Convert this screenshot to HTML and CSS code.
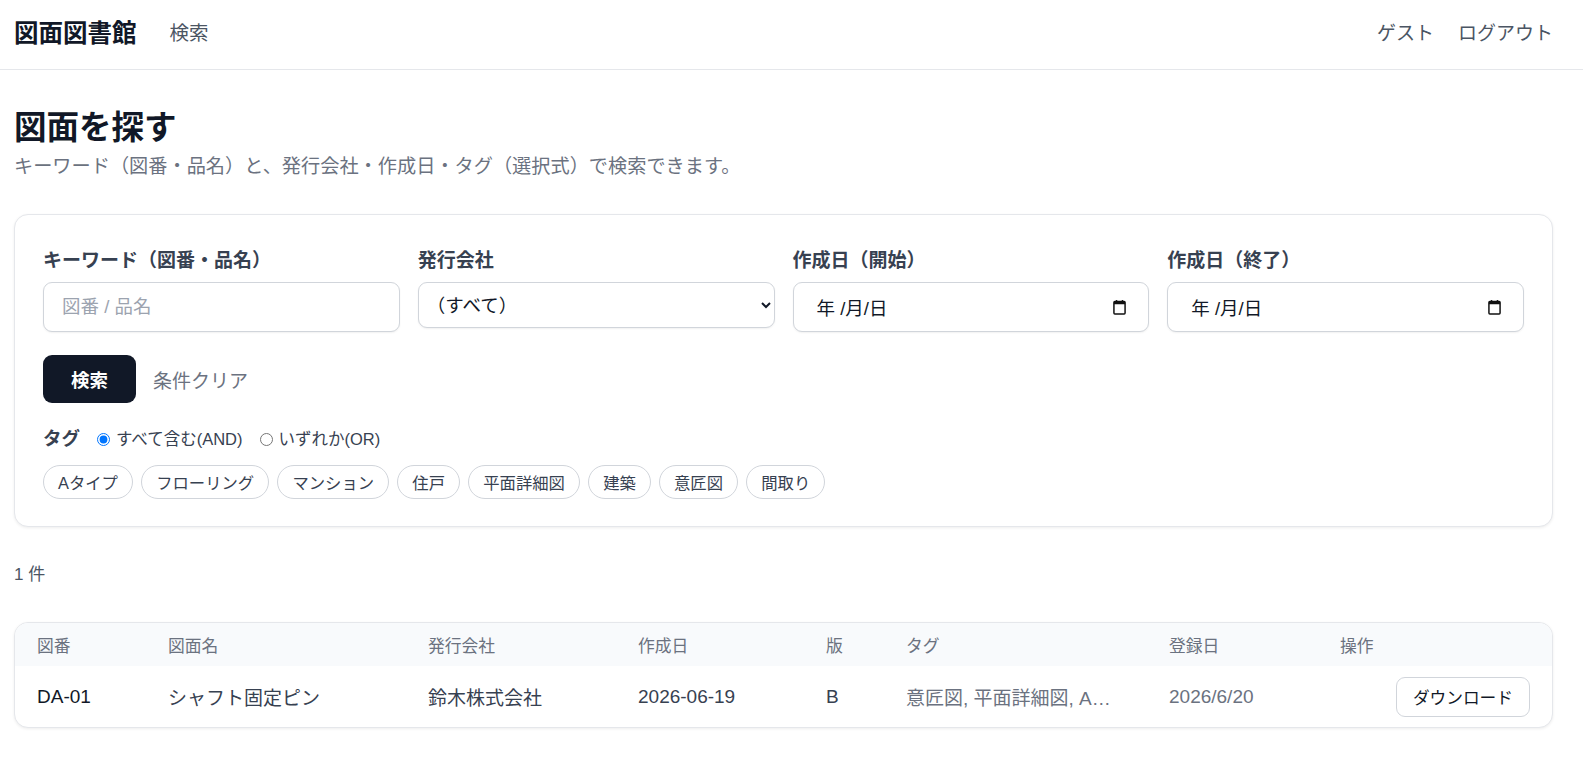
FILE: index.html
```html
<!DOCTYPE html>
<html lang="ja">

<head>
    <meta charset="utf-8">
    <title>図面を探す - 図面図書館</title>
    <link rel="stylesheet" href="styles.css">
</head>

<body>
    <header class="topbar">
        <a class="brand" href="#">図面図書館</a>
        <nav class="mainnav">
            <a href="#">検索</a>
        </nav>
        <div class="usernav">
            <span>ゲスト</span>
            <a href="#">ログアウト</a>
        </div>
    </header>

    <main class="page">
        <h1 class="page-title">図面を探す</h1>
        <p class="page-lead">キーワード（図番・品名）と、発行会社・作成日・タグ（選択式）で検索できます。</p>

        <form class="card search-form" onsubmit="return false">
            <div class="fields">
                <div class="field">
                    <label class="field-label" for="q">キーワード（図番・品名）</label>
                    <input class="control" id="q" type="text" placeholder="図番 / 品名">
                </div>
                <div class="field">
                    <label class="field-label" for="company">発行会社</label>
                    <select class="control control-select" id="company">
                        <option>（すべて）</option>
                        <option>鈴木株式会社</option>
                    </select>
                </div>
                <div class="field">
                    <label class="field-label">作成日（開始）</label>
                    <div class="control datebox">
                        <span>年 /月/日</span>
                        <svg class="cal-icon" viewBox="0 0 14 16" width="13" height="15">
                            <rect x="1" y="1.5" width="12" height="13.5" rx="1" fill="none" stroke="#111" stroke-width="1.6"/>
                            <rect x="1" y="1.5" width="12" height="3" fill="#111"/>
                            <rect x="3" y="0" width="1.6" height="3" fill="#111"/>
                            <rect x="9.4" y="0" width="1.6" height="3" fill="#111"/>
                        </svg>
                    </div>
                </div>
                <div class="field">
                    <label class="field-label">作成日（終了）</label>
                    <div class="control datebox">
                        <span>年 /月/日</span>
                        <svg class="cal-icon" viewBox="0 0 14 16" width="13" height="15">
                            <rect x="1" y="1.5" width="12" height="13.5" rx="1" fill="none" stroke="#111" stroke-width="1.6"/>
                            <rect x="1" y="1.5" width="12" height="3" fill="#111"/>
                            <rect x="3" y="0" width="1.6" height="3" fill="#111"/>
                            <rect x="9.4" y="0" width="1.6" height="3" fill="#111"/>
                        </svg>
                    </div>
                </div>
            </div>

            <div class="actions">
                <button class="btn-primary" type="submit">検索</button>
                <a class="link-clear" href="#">条件クリア</a>
            </div>

            <div class="tag-mode">
                <span class="tag-title">タグ</span>
                <label><input type="radio" name="mode" checked> すべて含む(AND)</label>
                <label><input type="radio" name="mode"> いずれか(OR)</label>
            </div>

            <div class="chips">
                <button type="button" class="chip">Aタイプ</button>
                <button type="button" class="chip">フローリング</button>
                <button type="button" class="chip">マンション</button>
                <button type="button" class="chip">住戸</button>
                <button type="button" class="chip">平面詳細図</button>
                <button type="button" class="chip">建築</button>
                <button type="button" class="chip">意匠図</button>
                <button type="button" class="chip">間取り</button>
            </div>
        </form>

        <p class="result-count">1 件</p>

        <div class="card table-card">
            <table class="results">
                <colgroup>
                    <col style="width: 131px">
                    <col style="width: 260px">
                    <col style="width: 210px">
                    <col style="width: 188px">
                    <col style="width: 80px">
                    <col style="width: 263px">
                    <col style="width: 171px">
                    <col>
                </colgroup>
                <thead>
                    <tr>
                        <th>図番</th>
                        <th>図面名</th>
                        <th>発行会社</th>
                        <th>作成日</th>
                        <th>版</th>
                        <th>タグ</th>
                        <th>登録日</th>
                        <th>操作</th>
                    </tr>
                </thead>
                <tbody>
                    <tr>
                        <td class="strong">DA-01</td>
                        <td>シャフト固定ピン</td>
                        <td>鈴木株式会社</td>
                        <td>2026-06-19</td>
                        <td>B</td>
                        <td class="muted" title="意匠図, 平面詳細図, Aタイプ, 住戸">意匠図, 平面詳細図, A…</td>
                        <td class="muted">2026/6/20</td>
                        <td class="op"><button class="btn-outline" type="button">ダウンロード</button></td>
                    </tr>
                </tbody>
            </table>
        </div>
    </main>
</body>

</html>
```

FILE: styles.css
```css
body {
    margin: 0;
    font-family: "Liberation Sans", "Noto Sans CJK JP", sans-serif;
    font-size: 19px;
    color: #111827;
    background: #fff;
}

a {
    color: inherit;
    text-decoration: none;
}

/* top bar */
.topbar {
    display: flex;
    align-items: center;
    height: 63px;
    padding: 0 30px 6px 14px;
    border-bottom: 1px solid #e5e7eb;
}

.brand {
    font-size: 24.5px;
    font-weight: 700;
    color: #111827;
}

.mainnav {
    margin-left: 33px;
    font-size: 19.5px;
    color: #4b5563;
}

.usernav {
    margin-left: auto;
    display: flex;
    gap: 24px;
    font-size: 19px;
    color: #4b5563;
}

/* page */
.page {
    padding: 0 30px 40px 14px;
}

.page-title {
    margin: 38px 0 0;
    font-size: 32.5px;
    line-height: 40px;
    font-weight: 700;
}

.page-lead {
    margin: 5px 0 0;
    font-size: 19.2px;
    line-height: 28px;
    color: #6b7280;
}

.card {
    border: 1px solid #e5e7eb;
    border-radius: 14px;
    background: #fff;
    box-shadow: 0 1px 3px rgba(0, 0, 0, 0.07);
}

.search-form {
    margin-top: 33px;
    padding: 28px 28px 27px;
}

.fields {
    display: grid;
    grid-template-columns: repeat(4, 1fr);
    gap: 18px;
    align-items: start;
}

.field-label {
    display: block;
    margin: 4px 0 7px;
    font-size: 19px;
    line-height: 28px;
    font-weight: 700;
    color: #374151;
}

.control {
    box-sizing: border-box;
    width: 100%;
    height: 50px;
    padding: 0 18px;
    border: 1px solid #d1d5db;
    border-radius: 9px;
    background: #fff;
    box-shadow: 0 1px 2px rgba(0, 0, 0, 0.06);
    font: inherit;
    font-size: 18.5px;
    color: #111827;
}

.control::placeholder {
    color: #9ca3af;
}

.control-select {
    height: 46px;
    padding: 0 4px;
}

.datebox {
    display: flex;
    align-items: center;
    justify-content: space-between;
    padding: 0 22px 0 23px;
}

.cal-icon {
    display: block;
}

.actions {
    display: flex;
    align-items: center;
    gap: 17px;
    margin-top: 23px;
}

.btn-primary {
    width: 93px;
    height: 48px;
    border: 0;
    border-radius: 9px;
    background: #111827;
    color: #fff;
    font: inherit;
    font-size: 18.5px;
    font-weight: 700;
}

.link-clear {
    font-size: 19px;
    color: #6b7280;
}

.tag-mode {
    display: flex;
    align-items: center;
    gap: 17px;
    margin-top: 24px;
    font-size: 16.5px;
    line-height: 24px;
    color: #374151;
}

.tag-title {
    font-size: 18.5px;
    font-weight: 700;
}

.tag-mode label {
    display: flex;
    align-items: center;
    gap: 6px;
}

.tag-mode input {
    margin: 0;
}

.chips {
    display: flex;
    flex-wrap: wrap;
    gap: 8.2px;
    margin-top: 14px;
}

.chip {
    height: 34px;
    padding: 0 14px;
    border: 1px solid #d1d5db;
    border-radius: 999px;
    background: #fff;
    font: inherit;
    font-size: 16.35px;
    color: #374151;
}

.result-count {
    margin: 36px 0 0;
    font-size: 17px;
    line-height: 24px;
    color: #4b5563;
}

/* results table */
.table-card {
    margin-top: 35px;
    overflow: hidden;
}

.results {
    width: 100%;
    border-collapse: collapse;
    table-layout: fixed;
}

.results th {
    height: 43px;
    padding: 0 22px;
    background: #f8fafc;
    text-align: left;
    font-size: 16.8px;
    font-weight: 400;
    color: #6b7280;
}

.results td {
    height: 61px;
    padding: 0 22px;
    font-size: 19px;
    color: #374151;
    white-space: nowrap;
    overflow: hidden;
}

.results td.strong {
    color: #111827;
}

.results td.muted {
    color: #6b7280;
}

.results td.op {
    text-align: right;
}

.btn-outline {
    height: 40px;
    padding: 0 16px;
    border: 1px solid #d1d5db;
    border-radius: 9px;
    background: #fff;
    font: inherit;
    font-size: 16.7px;
    color: #111827;
}
```
